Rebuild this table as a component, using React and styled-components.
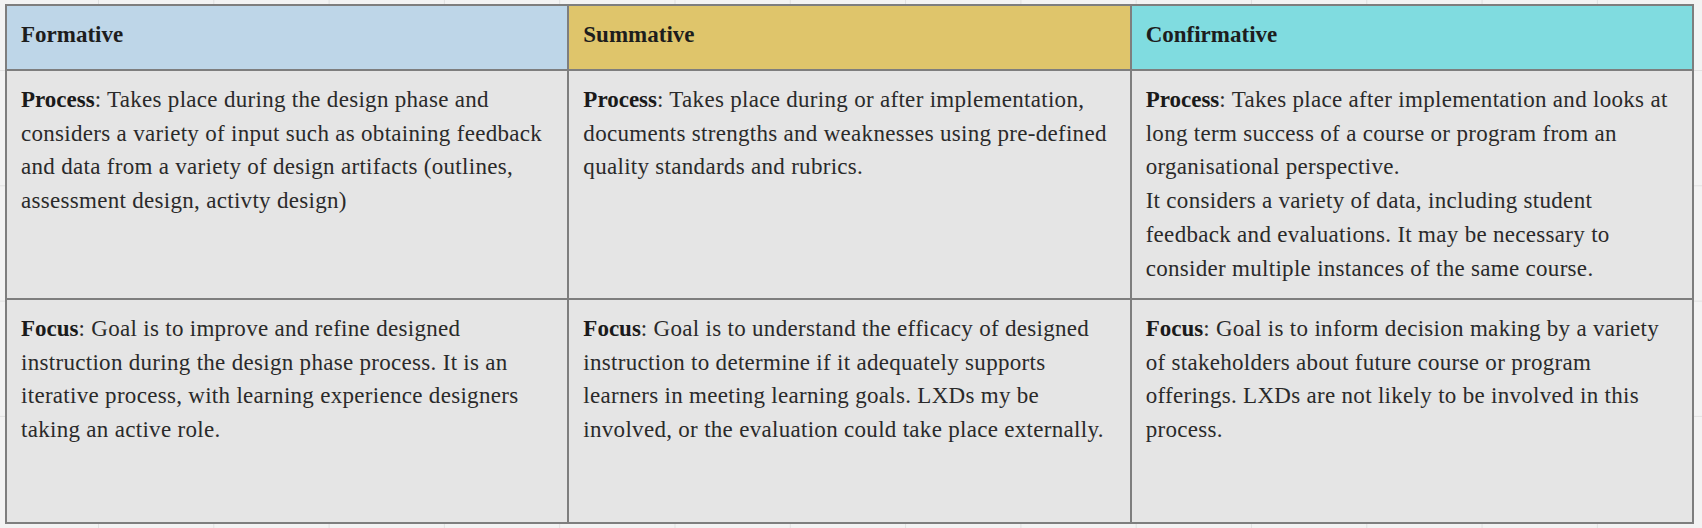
import styled, { createGlobalStyle } from "styled-components";

const GlobalStyle = createGlobalStyle`
  body {
    margin: 0;
    background-color: #f3f3f3;
    background-image: linear-gradient(to right, #e1e1e1 1px, transparent 1px),
      linear-gradient(to bottom, #e1e1e1 1px, transparent 1px);
    background-size: 115.3px 115.3px;
    background-position: 98px 70px;
    font-family: "Liberation Serif", "DejaVu Serif", serif;
    color: #222;
  }
`;

const Wrap = styled.div`
  padding: 4px 0 0 5px;
`;

const Board = styled.div`
  display: grid;
  width: 1689px;
  grid-template-columns: repeat(3, 1fr);
  grid-template-rows: 63px 227px 222px;
  gap: 2px;
  padding: 2px;
  box-sizing: border-box;
  background: #7e7e7e;
`;

const Head = styled.div`
  display: flex;
  align-items: center;
  padding: 0 14px 5px;
  background: ${(props) => props.$bg};
  font-size: 23px;
  font-weight: bold;
  color: #1d1d1d;
`;

const Cell = styled.div`
  padding: 12px 14px;
  background: #e5e5e5;
  font-size: 23px;
  letter-spacing: 0.3px;
  line-height: 33.7px;
  color: #2a2a2a;
`;

const Label = styled.b`
  font-weight: bold;
  letter-spacing: 0;
  color: #1a1a1a;
`;

const heads = [
  { title: "Formative", bg: "#bed6e8" },
  { title: "Summative", bg: "#dfc56b" },
  { title: "Confirmative", bg: "#80dce0" },
];

const process = [
  <>
    <Label>Process</Label>: Takes place during the design phase and<br />
    considers a variety of input such as obtaining feedback<br />
    and data from a variety of design artifacts (outlines,<br />
    assessment design, activty design)
  </>,
  <>
    <Label>Process</Label>: Takes place during or after implementation,<br />
    documents strengths and weaknesses using pre-defined<br />
    quality standards and rubrics.
  </>,
  <>
    <Label>Process</Label>: Takes place after implementation and looks at<br />
    long term success of a course or program from an<br />
    organisational perspective.<br />
    It considers a variety of data, including student<br />
    feedback and evaluations. It may be necessary to<br />
    consider multiple instances of the same course.
  </>,
];

const focus = [
  <>
    <Label>Focus</Label>: Goal is to improve and refine designed<br />
    instruction during the design phase process. It is an<br />
    iterative process, with learning experience designers<br />
    taking an active role.
  </>,
  <>
    <Label>Focus</Label>: Goal is to understand the efficacy of designed<br />
    instruction to determine if it adequately supports<br />
    learners in meeting learning goals. LXDs my be<br />
    involved, or the evaluation could take place externally.
  </>,
  <>
    <Label>Focus</Label>: Goal is to inform decision making by a variety<br />
    of stakeholders about future course or program<br />
    offerings. LXDs are not likely to be involved in this<br />
    process.
  </>,
];

export default function App() {
  return (
    <Wrap>
      <GlobalStyle />
      <Board>
        {heads.map((h) => (
          <Head key={h.title} $bg={h.bg}>
            {h.title}
          </Head>
        ))}
        {process.map((c, i) => (
          <Cell key={"p" + i}>{c}</Cell>
        ))}
        {focus.map((c, i) => (
          <Cell key={"f" + i}>{c}</Cell>
        ))}
      </Board>
    </Wrap>
  );
}
